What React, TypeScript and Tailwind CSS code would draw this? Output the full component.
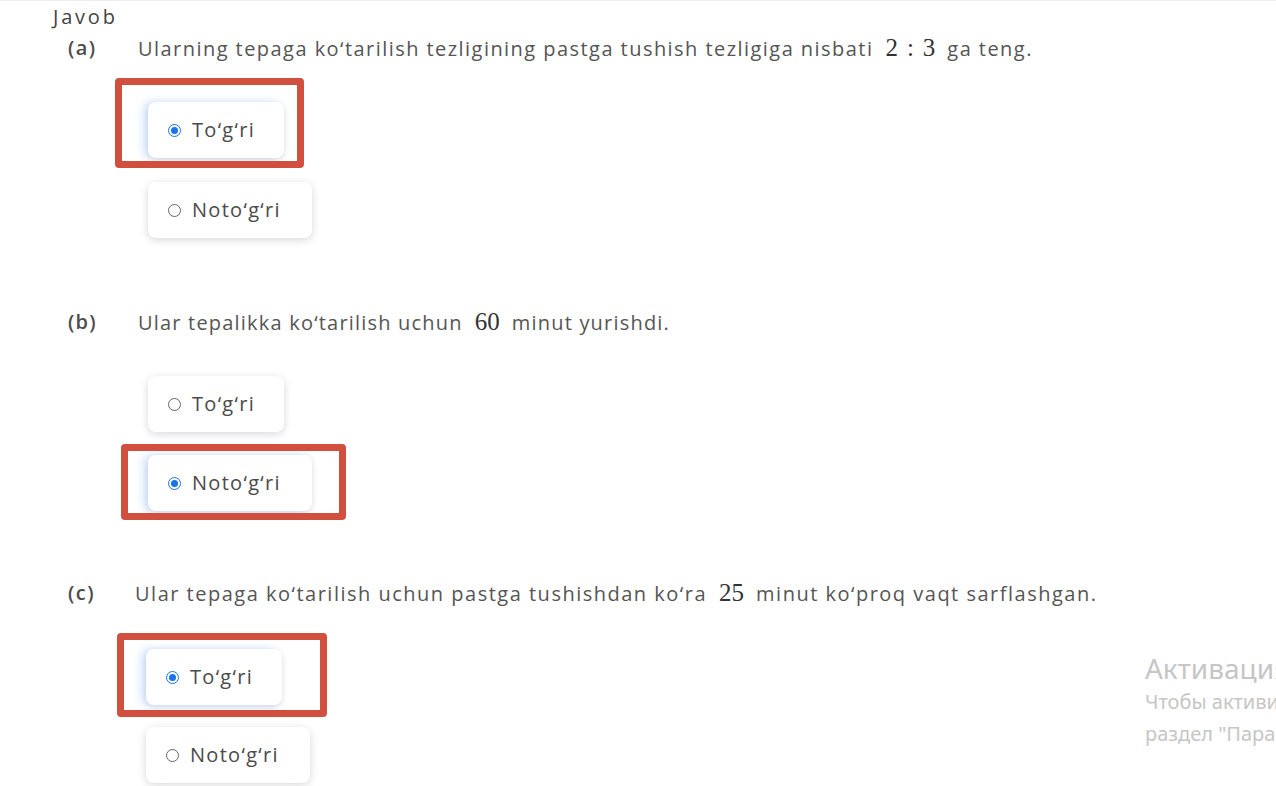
import React from "react";

const font = { fontFamily: "'Open Sans', sans-serif" };

function Radio({ checked }: { checked: boolean }) {
  return checked ? (
    <span className="inline-flex h-[13px] w-[13px] items-center justify-center rounded-full border-[1.5px] border-[#1a73e8] bg-white">
      <span className="h-[7px] w-[7px] rounded-full bg-[#1a73e8]" />
    </span>
  ) : (
    <span className="inline-block h-[13px] w-[13px] rounded-full border border-[#666] bg-white" />
  );
}

function Option({ label, checked, width }: { label: string; checked: boolean; width: string }) {
  return (
    <div
      className={
        "flex h-[56px] items-center gap-[11px] rounded-lg bg-white pl-[20px] text-[20px] tracking-[1.3px] text-[#4a4a4a] " +
        width +
        (checked
          ? " shadow-[-5px_0_10px_rgba(100,160,255,0.28),0_2px_6px_rgba(0,0,0,0.12)]"
          : " shadow-[0_2px_8px_rgba(0,0,0,0.16)]")
      }
    >
      <Radio checked={checked} />
      <span>{label}</span>
    </div>
  );
}

function Math({ children }: { children: React.ReactNode }) {
  return (
    <span
      className="mx-[12px] inline-flex items-baseline text-[25px] tracking-normal text-[#333]"
      style={{ fontFamily: "'Liberation Serif', 'DejaVu Serif', serif" }}
    >
      {children}
    </span>
  );
}

function Question({ label, children, textPad, track }: { label: string; children: React.ReactNode; textPad: string; track: string }) {
  return (
    <div className={"flex h-[28px] items-center whitespace-nowrap pl-[68px] text-[20px] text-[#555] " + track}>
      <span className={"font-semibold text-[#4d4d4d] " + textPad}>{label}</span>
      <span className="flex items-baseline">{children}</span>
    </div>
  );
}

export default function App() {
  return (
    <div className="relative h-[786px] w-full overflow-hidden bg-white" style={font}>
      <div className="absolute left-0 right-0 top-0 h-px bg-[#eeeeee]" />
      <div className="pl-[53px] pt-[4px] text-[20px] leading-[26px] tracking-[2.8px] text-[#444]">Javob</div>

      {/* (a) */}
      <div className="mt-[4px]">
        <Question label="(a)" textPad="w-[70px]" track="tracking-[1.45px]">
          <span>Ularning tepaga ko‘tarilish tezligining pastga tushish tezligiga nisbati</span>
          <Math>
            <span>2</span>
            <span className="mx-[9px]">:</span>
            <span>3</span>
          </Math>
          <span>ga teng.</span>
        </Question>
        <div className="mt-[40px] flex flex-col gap-[24px] pl-[148px]">
          <div className="relative w-[136px]">
            <div className="absolute left-[-33px] top-[-24px] h-[90px] w-[189px] rounded-[4px] border-[7px] border-[#d04f3f]" />
            <Option label="To‘g‘ri" checked width="w-[136px]" />
          </div>
          <Option label="Noto‘g‘ri" checked={false} width="w-[164px]" />
        </div>
      </div>

      {/* (b) */}
      <div className="mt-[70px]">
        <Question label="(b)" textPad="w-[70px]" track="tracking-[1.2px]">
          <span>Ular tepalikka ko‘tarilish uchun</span>
          <Math>60</Math>
          <span>minut yurishdi.</span>
        </Question>
        <div className="mt-[40px] flex flex-col gap-[23px] pl-[148px]">
          <Option label="To‘g‘ri" checked={false} width="w-[136px]" />
          <div className="relative w-[164px]">
            <div className="absolute left-[-27px] top-[-11px] h-[76px] w-[225px] rounded-[4px] border-[7px] border-[#d04f3f]" />
            <Option label="Noto‘g‘ri" checked width="w-[164px]" />
          </div>
        </div>
      </div>

      {/* (c) */}
      <div className="mt-[68px]">
        <Question label="(c)" textPad="w-[67px]" track="tracking-[1.5px]">
          <span>Ular tepaga ko‘tarilish uchun pastga tushishdan ko‘ra</span>
          <Math>25</Math>
          <span>minut ko‘proq vaqt sarflashgan.</span>
        </Question>
        <div className="mt-[42px] flex flex-col gap-[22px] pl-[146px]">
          <div className="relative w-[136px]">
            <div className="absolute left-[-29px] top-[-16px] h-[84px] w-[210px] rounded-[4px] border-[7px] border-[#d04f3f]" />
            <Option label="To‘g‘ri" checked width="w-[136px]" />
          </div>
          <Option label="Noto‘g‘ri" checked={false} width="w-[164px]" />
        </div>
      </div>

      {/* watermark */}
      <div
        className="pointer-events-none absolute left-[1145px] top-[650px] whitespace-nowrap text-[#c6c6c6]"
        style={{ fontFamily: "'Noto Sans', 'Open Sans', sans-serif" }}
      >
        <div className="text-[28px] leading-[36px]">Активация Windows</div>
        <div className="text-[20px] leading-[32px]">Чтобы активировать Windows, перейдите в</div>
        <div className="text-[20px] leading-[32px]">раздел "Параметры".</div>
      </div>
    </div>
  );
}
